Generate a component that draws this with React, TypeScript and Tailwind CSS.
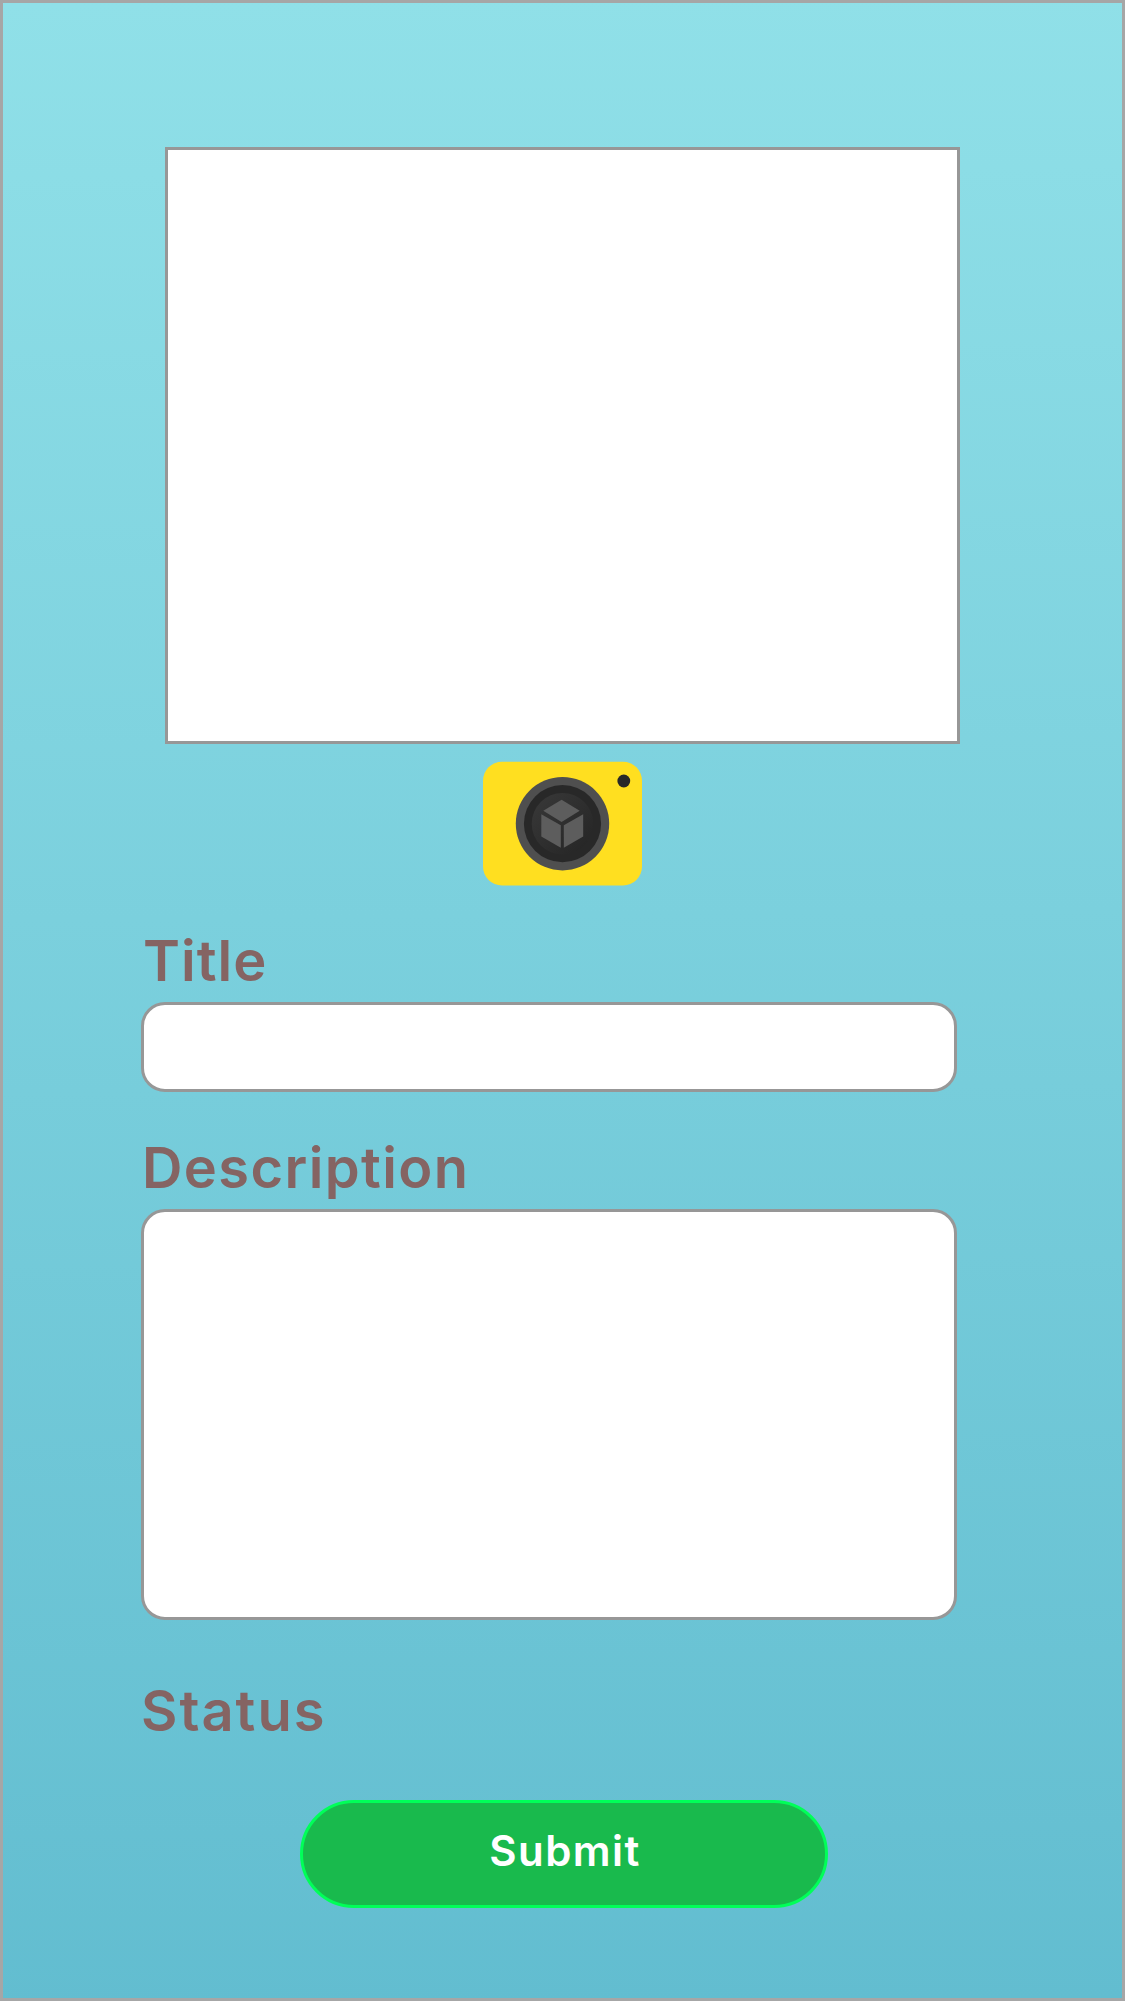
import React from "react";

const label = "font-semibold text-[#856463] whitespace-nowrap text-[56px] leading-[66px]";

function CameraIcon() {
  return (
    <svg width="159" height="124" viewBox="0 0 159 124" className="block overflow-visible" aria-hidden="true">
      <defs>
        <linearGradient id="lens" x1="0" y1="0" x2="1" y2="1">
          <stop offset="0" stopColor="#393939" />
          <stop offset="1" stopColor="#242424" />
        </linearGradient>
      </defs>
      <rect y="-0.3" width="159" height="123.8" rx="19" fill="#ffdf20" />
      <circle cx="79.5" cy="61.7" r="46.7" fill="#4f4f4f" />
      <circle cx="79.5" cy="61.7" r="38.6" fill="#282828" />
      <circle cx="79.5" cy="61.7" r="30.8" fill="url(#lens)" />
      <path d="M78.6 37.7 96.7 48.7 78.6 60 60.3 48.7Z" fill="#5d5d5d" />
      <path d="M58.3 52.2 77.8 63.3V85.8L58.3 74.6Z" fill="#5d5d5d" />
      <path d="M100.2 52.2 80.8 63.3V85.8L100.2 74.6Z" fill="#5d5d5d" />
      <circle cx="140.8" cy="19" r="6.4" fill="#282828" />
    </svg>
  );
}

export default function App() {
  return (
    <main
      className="box-border flex h-[2001px] w-[1125px] flex-col border-[3px] border-[#a6a6a6] bg-[linear-gradient(179.5deg,#90e0e8_0%,#62bdd0_100%)]"
      style={{ fontFamily: "Inter, sans-serif" }}
    >
      <div className="mt-[144px] ml-[162px] h-[597px] w-[795px] shrink-0 border-[3px] border-[#979797] bg-white" />
      <button type="button" className="mt-[18px] ml-[480px] h-[124px] w-[159px] shrink-0" aria-label="Take photo">
        <CameraIcon />
      </button>
      <form className="flex w-[816px] flex-col ml-[138px]" onSubmit={(e) => e.preventDefault()}>
        <label htmlFor="title" className={`${label} mt-[42px] ml-[2px] tracking-[1px]`}>Title</label>
        <input id="title" className="mt-[8px] h-[90px] rounded-[24px] border-[3px] border-[#979797] bg-white px-6 text-[40px] outline-none" />
        <label htmlFor="description" className={`${label} mt-[43px] ml-px tracking-[1.4px]`}>Description</label>
        <textarea id="description" className="mt-[8px] h-[411px] resize-none rounded-[24px] border-[3px] border-[#979797] bg-white p-6 text-[40px] outline-none" />
        <p className={`${label} mt-[58px] tracking-[2px]`}>Status</p>
        <button type="submit" className="mt-[56px] ml-[159px] flex h-[108px] w-[528px] items-center justify-center rounded-full border-[3px] border-[#00ff58] bg-[#19ba4d] pb-[7px] pl-[2px] text-[42px] leading-[50px] font-semibold tracking-[1.4px] text-white">
          Submit
        </button>
      </form>
    </main>
  );
}
